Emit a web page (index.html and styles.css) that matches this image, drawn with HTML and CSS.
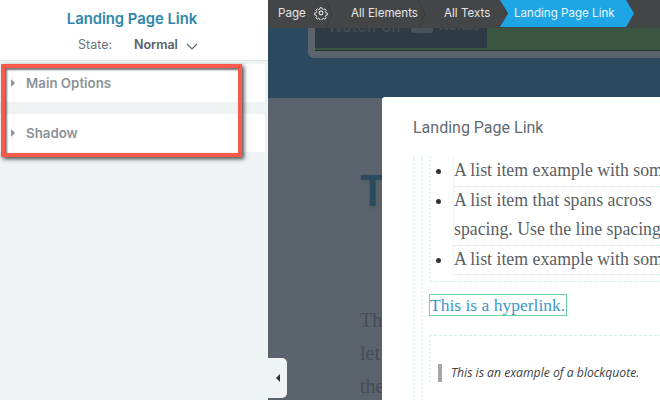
FILE: index.html
```html
<!DOCTYPE html>
<html lang="en">
<head>
<meta charset="utf-8">
<title>Landing Page Link</title>
<link rel="stylesheet" href="styles.css">
</head>
<body>
<div class="app">
  <aside class="sidebar">
    <header class="side-head">
      <h1 class="side-title">Landing Page Link</h1>
      <div class="state">
        <span class="state-label">State:</span>
        <span class="state-value">Normal</span>
        <svg class="chev" width="12" height="7" viewBox="0 0 12 7"><path d="M1 1l5 5 5-5" fill="none" stroke="#5c6670" stroke-width="1.2"/></svg>
      </div>
    </header>
    <div class="panels">
      <div class="panel"><span class="tri"></span>Main Options</div>
      <div class="panel"><span class="tri"></span>Shadow</div>
    </div>
    <div class="highlight"></div>
  </aside>
  <main class="canvas">
    <nav class="crumbs">
      <span class="crumb crumb-page">Page
        <svg class="gear" width="14" height="14" viewBox="0 0 24 24" fill="none" stroke="#e4e6e8" stroke-width="1.8"><circle cx="12" cy="12" r="3.2"/><path d="M10.200 2h3.600l.6 2.900 2.200.9 2.500-1.600 2.600 2.600-1.600 2.500.9 2.200 2.900.6v3.600l-2.900.6-.9 2.200 1.600 2.500-2.600 2.600-2.500-1.600-2.200.9-.6 2.900h-3.600l-.6-2.900-2.200-.9-2.500 1.600-2.600-2.600 1.600-2.500-.9-2.200-2.900-.6v-3.600l2.900-.6.900-2.200-1.600-2.500 2.600-2.600 2.500 1.600 2.200-.9z" transform="translate(1.100 1.100) scale(.91)"/></svg>
      </span>
      <span class="crumb crumb-mid">All Elements</span>
      <span class="crumb crumb-last">All Texts</span>
      <span class="crumb crumb-active">Landing Page Link</span>
    </nav>
    <section class="hero">
      <div class="video">
        <div class="video-inner"><span class="watch">Watch on</span><span class="yt-box"></span><span class="yt">YouTube</span></div>
      </div>
    </section>
    <section class="page-bg">
      <div class="bg-head">T</div>
      <p class="bg-copy">Th<br>let<br>the</p>
    </section>
    <div class="toggle"><span class="toggle-tri"></span></div>
    <article class="modal">
      <h2 class="modal-title">Landing Page Link</h2>
      <div class="guide">
        <div class="guide guide-inner">
          <div class="list-box">
            <ul class="list">
              <li><span class="item">A list item example with some</span></li>
              <li><span class="item">A list item that spans across<br>spacing. Use the line spacing</span></li>
              <li><span class="item">A list item example with some</span></li>
            </ul>
          </div>
          <p class="link-row"><a class="link">This is a hyperlink.</a></p>
          <div class="quote-box">
            <blockquote class="quote">This is an example of a blockquote.</blockquote>
          </div>
        </div>
      </div>
    </article>
  </main>
</div>
</body>
</html>
```
FILE: styles.css
```css
* { box-sizing: border-box; }
html, body { margin: 0; height: 100%; }
body { overflow: hidden; font-family: "Inter", "Liberation Sans", sans-serif; background: #eff3f4; }
.app { display: flex; width: 660px; height: 400px; overflow: hidden; }

.sidebar { position: relative; flex: 0 0 268px; background: #eff3f4; }
.side-head { height: 61px; background: #fff; border-bottom: 1px solid #dfe6e8; padding-top: 10px; text-align: center; }
.side-title { margin: 0; padding-right: 4px; font-size: 14.800px; line-height: 18px; font-weight: 600; color: #2f86ab; }
.state { display: flex; align-items: center; margin-top: 9px; padding-left: 78px; font-size: 12.500px; line-height: 16px; color: #6a737b; text-align: left; }
.state-label { flex: 0 0 56px; }
.state-value { font-weight: 600; color: #56606a; margin-right: 8px; }
.chev { display: block; margin-top: 2px; }
.panels { display: flex; flex-direction: column; gap: 12px; padding: 3px 3px 0 0; }
.panel { display: flex; align-items: center; height: 38px; padding: 0 0 0 11px; background: #fff; border-radius: 0 3px 3px 0; font-size: 13.300px; font-weight: 600; color: #8b9399; }
.tri { width: 0; height: 0; margin-right: 11px; border-left: 4px solid #8b9399; border-top: 4px solid transparent; border-bottom: 4px solid transparent; }
.highlight { position: absolute; left: 1px; top: 64px; width: 241px; height: 93px; border: 4px solid #fb5a4b; box-shadow: 2px 2px 4px rgba(0,0,0,.7), inset 2px 2px 2px rgba(0,0,0,.55); }

.canvas { position: relative; flex: 1; display: flex; flex-direction: column; min-width: 0; overflow: hidden; background: #5b636d; }
.crumbs { display: flex; align-items: stretch; height: 28px; flex: none; background: #444546; font-size: 11.600px; color: #e4e6e8; position: relative; z-index: 1; }
.crumb { position: relative; display: flex; align-items: center; gap: 8px; padding-bottom: 2px; }
.crumb-page { width: 83px; padding-left: 10px; }
.crumb-mid { width: 93px; }
.crumb-last { width: 57px; }
.crumb-page::after, .crumb-mid::after, .crumb-last::after { content: ""; position: absolute; right: 15px; top: 4px; width: 19px; height: 19px; border-top: 1px solid #353637; border-right: 1px solid #353637; transform: scaleX(.45) rotate(45deg); }
.crumb-last::after { right: -11px; border-width: 2px 2px 0 0; }
.crumb-active { width: 134px; height: 27px; padding-left: 14px; background: #1ea5e6; color: #e9f6fd; clip-path: polygon(0 0, 126px 0, 134px 50%, 126px 100%, 0 100%, 8px 50%); margin-left: -1px; }
.gear { display: block; }

.hero { flex: none; height: 70px; background: #2b495f; padding-left: 40px; }
.video { height: 30px; background: #3a5540; border: solid #5b636d; border-width: 0 0 7px 7px; border-radius: 0 0 0 6px; box-shadow: inset 0 -1px 0 #2b2f30; }
.video-inner { display: flex; align-items: center; gap: 10px; width: 172px; height: 28px; padding: 0 0 16px 13px; background: #2f3b44; font-size: 15px; color: #45525b; overflow: hidden; transform: translateY(-8px); }
.watch { letter-spacing: .8px; }
.yt-box { flex: none; width: 22px; height: 14px; background: #47545c; border-radius: 3px; }
.yt { font-size: 10px; font-weight: 700; margin-left: -6px; }

.page-bg { flex: 1; padding: 66px 0 0 92px; }
.bg-head { font-family: "Noto Sans", sans-serif; font-size: 44px; line-height: 50px; font-weight: 600; color: #2a4a60; text-shadow: 2px 2px 3px rgba(60,90,70,.4); }
.bg-copy { margin: 90px 0 0; font-family: "Liberation Serif", serif; font-size: 20px; line-height: 33px; color: #454c56; }

.toggle { position: absolute; left: 0; bottom: 2px; width: 19px; height: 40px; background: #eff3f4; border-radius: 0 5px 5px 0; display: flex; align-items: center; justify-content: center; }
.toggle-tri { width: 0; height: 0; border-right: 4px solid #333; border-top: 4px solid transparent; border-bottom: 4px solid transparent; }

.modal { position: absolute; left: 114px; top: 97px; width: 300px; height: 330px; padding: 21px 0 0 31px; background: #fff; border-radius: 3px 0 0 0; white-space: nowrap; }
.modal-title { margin: 0 0 19px; font-family: "Roboto", "Liberation Sans", sans-serif; font-size: 16px; line-height: 19px; font-weight: 400; color: #626a73; }
.guide { border-left: 2px dotted #e2f6f1; padding-left: 6px; height: 300px; }
.guide-inner { padding-left: 6px; }
.list-box { height: 126px; border-left: 2px dotted #e2f6f1; border-bottom: 1px dashed #c9eee3; }
.list { margin: 0; padding: 0 0 0 22px; list-style: disc; font-family: "Liberation Serif", serif; font-size: 17.800px; line-height: 29.500px; color: #5a5f63; }
.list li::marker { color: #333; }
.item { display: block; margin-bottom: -1px; border-left: 1px dotted #d4f0e8; border-bottom: 1px dotted #b6ecd8; }
.link-row { margin: 0; padding-top: 12px; line-height: 0; }
.link { display: inline-block; width: 138px; height: 22px; border: 1px solid #6bd3a0; font-family: "Liberation Serif", serif; font-size: 17.500px; line-height: 20px; color: #3c98c8; overflow: hidden; }
.quote-box { margin-top: 19px; border-top: 1px dashed #c9eee3; border-left: 2px dotted #e2f6f1; padding: 28px 0 0 7px; }
.quote { margin: 0; padding-left: 9px; border-left: 4px solid #a3a5a8; font-family: "Open Sans", sans-serif; font-style: italic; font-size: 12.200px; line-height: 18px; color: #3c3f44; }
```
